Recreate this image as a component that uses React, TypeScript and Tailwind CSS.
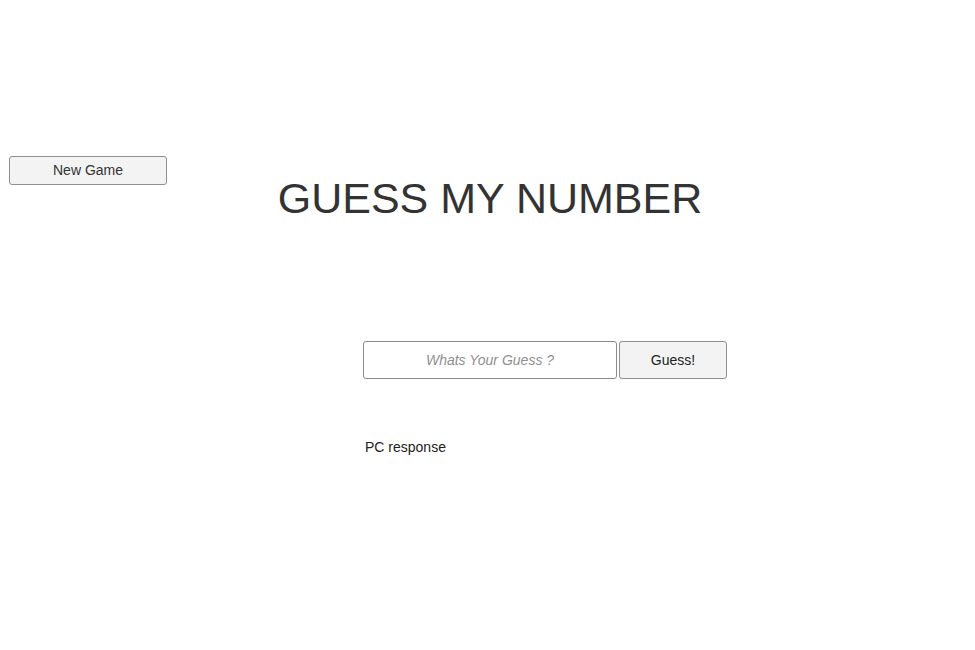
import { useState } from "react";

export default function App() {
  const [guess, setGuess] = useState("");

  return (
    <div className="min-h-[650px] w-full bg-white text-[#333] font-['Liberation_Sans',Arial,sans-serif]">
      <div className="grid pt-[156px]">
        <button className="col-start-1 row-start-1 self-start justify-self-start ml-[9px] w-[158px] h-[29px] rounded-[3px] border border-[#8f8f8f] bg-[#f3f3f3] text-[14px] text-[#333]">
          New Game
        </button>
        <h1 className="col-start-1 row-start-1 mt-[21px] ml-[5px] text-center text-[43px] leading-none font-normal text-[#333]">
          GUESS MY NUMBER
        </h1>
      </div>

      <div className="mx-auto mt-[121px] w-[249px]">
        <div className="flex gap-[2px] w-max">
          <input
            value={guess}
            onChange={(e) => setGuess(e.target.value)}
            placeholder="Whats Your Guess ?"
            className="w-[254px] h-[38px] rounded-[3px] border border-[#8a8a8a] bg-white text-center text-[14px] text-[#333] placeholder:italic placeholder:text-[#8f8f8f] outline-none"
          />
          <button className="w-[108px] h-[38px] rounded-[3px] border border-[#8f8f8f] bg-[#f3f3f3] text-[14px] text-[#222]">
            Guess!
          </button>
        </div>
        <p className="mt-[60px] ml-[2px] text-[14px] leading-[17px] text-[#222]">PC response</p>
      </div>
    </div>
  );
}
